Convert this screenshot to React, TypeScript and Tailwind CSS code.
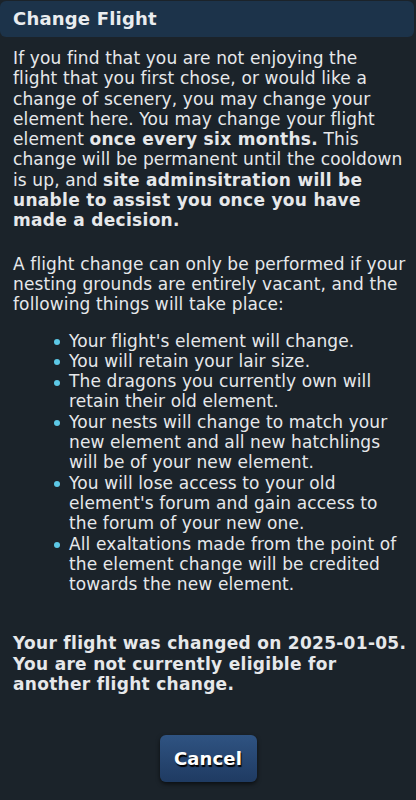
import React from 'react';

const items: string[] = [
    "Your flight's element will change.",
    'You will retain your lair size.',
    'The dragons you currently own will retain their old element.',
    'Your nests will change to match your new element and all new hatchlings will be of your new element.',
    "You will lose access to your old element's forum and gain access to the forum of your new one.",
    'All exaltations made from the point of the element change will be credited towards the new element.',
];

const App: React.FC = () => {
    return (
        <div
            className="w-[416px] min-h-[800px] bg-[#1b232a] text-[#e6e8ea] text-[17px] leading-[20.3px] tracking-[0.12px]"
            style={{ fontFamily: '"DejaVu Sans", Verdana, sans-serif' }}
        >
            <div className="pt-px pr-[2px]">
                <div className="h-[36px] rounded-[6px] bg-[#1c334a] px-[13px] flex items-center">
                    <h2 className="text-[18px] font-bold text-[#e9ecef] tracking-[0.2px]">Change Flight</h2>
                </div>
            </div>

            <div className="pl-[13px] pr-[3px] pt-[11px]">
                <p className="pr-[9px]">
                    If you find that you are not enjoying the flight that you first chose, or would like a
                    change of scenery, you may change your element here. You may change your flight element{' '}
                    <b className="tracking-[0.3px]">once every six months.</b> This change will be permanent until the cooldown is up, and{' '}
                    <b className="tracking-[0.3px]">site adminsitration will be unable to assist you once you have made a decision.</b>
                </p>

                <p className="mt-[23px]">
                    A flight change can only be performed if your nesting grounds are entirely vacant, and the
                    following things will take place:
                </p>

                <ul className="mt-[16px] pl-[41px] pr-[10px]">
                    {items.map((item, i) => (
                        <li key={i} className="relative pl-[15px]">
                            <span className="absolute left-0 top-[8.5px] w-[6px] h-[6px] rounded-full bg-[#5cc8e6]"></span>
                            {item}
                        </li>
                    ))}
                </ul>

                <p className="mt-[39px] font-bold tracking-[0.3px]">
                    Your flight was changed on 2025-01-05. You are not currently eligible for another flight change.
                </p>
            </div>

            <div className="flex justify-center mt-[41px] pb-[18px]">
                <button
                    className="w-[97px] h-[47px] rounded-[6px] bg-gradient-to-b from-[#2f5382] to-[#1f3b62] text-white text-[18px] font-bold shadow-[0_2px_4px_rgba(0,0,0,0.6)] [text-shadow:1px_2px_1px_#000]"
                >
                    Cancel
                </button>
            </div>
        </div>
    );
};

export default App;
